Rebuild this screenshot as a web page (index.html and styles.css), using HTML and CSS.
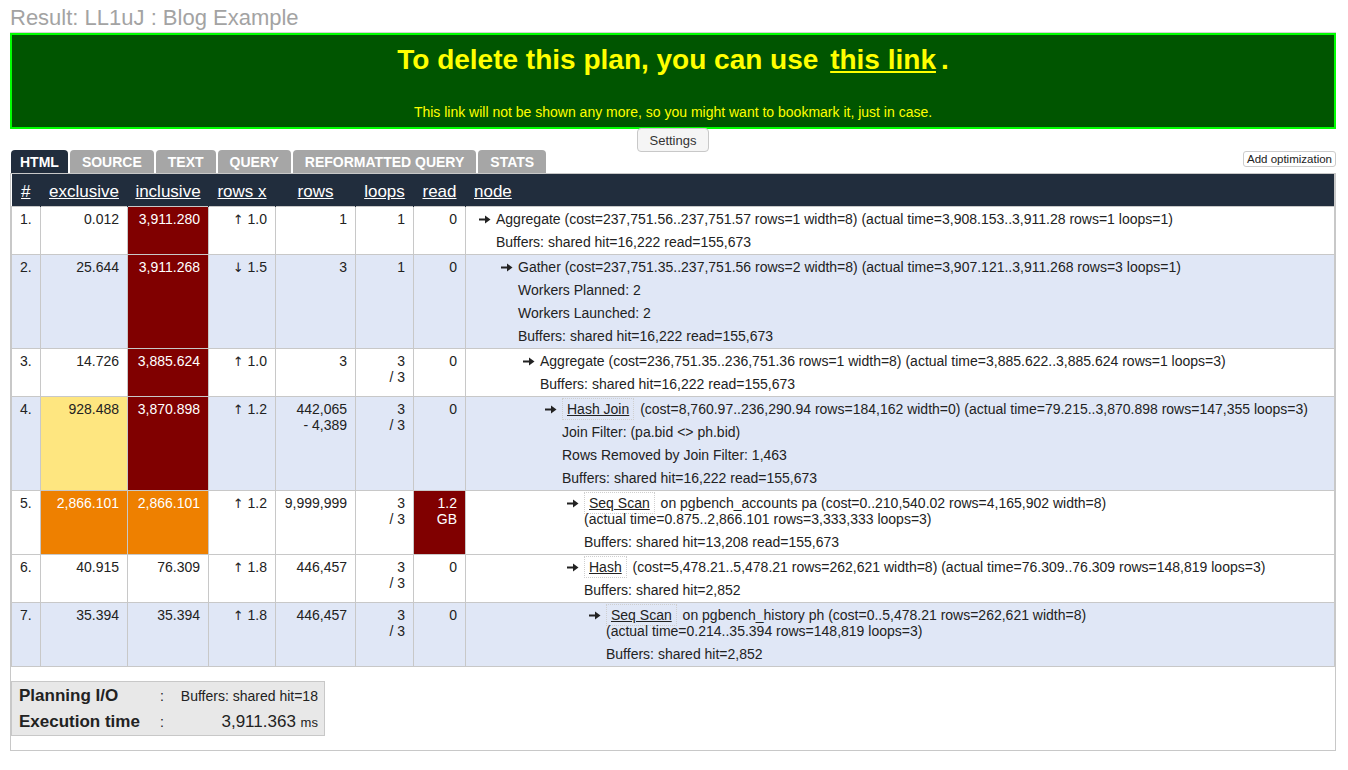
FILE: index.html
```html
<!DOCTYPE html>
<html>
<head>
<meta charset="utf-8">
<title>Result: LL1uJ : Blog Example</title>
<link rel="stylesheet" href="styles.css">
</head>
<body>
<div class="page">
  <h1 class="title">Result: LL1uJ : Blog Example</h1>
  <div class="banner">
    <div class="banner-head">To delete this plan, you can use <a href="#">this link</a>.</div>
    <div class="banner-note">This link will not be shown any more, so you might want to bookmark it, just in case.</div>
  </div>
  <div class="settings-row"><button class="settings">Settings</button></div>
  <div class="tabbar">
    <div class="tabs">
      <span class="tab active">HTML</span>
      <span class="tab">SOURCE</span>
      <span class="tab">TEXT</span>
      <span class="tab">QUERY</span>
      <span class="tab">REFORMATTED QUERY</span>
      <span class="tab">STATS</span>
    </div>
    <button class="addopt">Add optimization</button>
  </div>
  <div class="plan">
    <table class="explain">
      <colgroup>
        <col class="w-idx"><col class="w-excl"><col class="w-incl"><col class="w-rx"><col class="w-rows"><col class="w-loops"><col class="w-read"><col>
      </colgroup>
      <thead>
        <tr>
          <th><a>#</a></th>
          <th><a>exclusive</a></th>
          <th><a>inclusive</a></th>
          <th><a>rows x</a></th>
          <th><a>rows</a></th>
          <th><a>loops</a></th>
          <th><a>read</a></th>
          <th class="node-h"><a>node</a></th>
        </tr>
      </thead>
      <tbody>
        <tr>
          <td class="idx">1.</td>
          <td class="num">0.012</td>
          <td class="num c-dark">3,911.280</td>
          <td class="num"><span class="ud">↑</span> 1.0</td>
          <td class="num">1</td>
          <td class="num">1</td>
          <td class="num">0</td>
          <td class="node l0">
            <div class="p hd"><span class="arr"><svg width="12" height="9" viewBox="0 0 12 9"><rect x="0" y="3.5" width="7" height="2" fill="#222"/><polygon points="6,0.5 11.5,4.5 6,8.5" fill="#222"/></svg></span>Aggregate <span class="nw">(cost=237,751.56..237,751.57 rows=1 width=8)</span> <span class="nw">(actual time=3,908.153..3,911.28 rows=1 loops=1)</span></div>
            <div class="p">Buffers: shared hit=16,222 read=155,673</div>
          </td>
        </tr>
        <tr class="alt">
          <td class="idx">2.</td>
          <td class="num">25.644</td>
          <td class="num c-dark">3,911.268</td>
          <td class="num"><span class="ud">↓</span> 1.5</td>
          <td class="num">3</td>
          <td class="num">1</td>
          <td class="num">0</td>
          <td class="node l1">
            <div class="p hd"><span class="arr"><svg width="12" height="9" viewBox="0 0 12 9"><rect x="0" y="3.5" width="7" height="2" fill="#222"/><polygon points="6,0.5 11.5,4.5 6,8.5" fill="#222"/></svg></span>Gather <span class="nw">(cost=237,751.35..237,751.56 rows=2 width=8)</span> <span class="nw">(actual time=3,907.121..3,911.268 rows=3 loops=1)</span></div>
            <div class="p">Workers Planned: 2</div>
            <div class="p">Workers Launched: 2</div>
            <div class="p">Buffers: shared hit=16,222 read=155,673</div>
          </td>
        </tr>
        <tr>
          <td class="idx">3.</td>
          <td class="num">14.726</td>
          <td class="num c-dark">3,885.624</td>
          <td class="num"><span class="ud">↑</span> 1.0</td>
          <td class="num">3</td>
          <td class="num">3<br>/ 3</td>
          <td class="num">0</td>
          <td class="node l2">
            <div class="p hd"><span class="arr"><svg width="12" height="9" viewBox="0 0 12 9"><rect x="0" y="3.5" width="7" height="2" fill="#222"/><polygon points="6,0.5 11.5,4.5 6,8.5" fill="#222"/></svg></span>Aggregate <span class="nw">(cost=236,751.35..236,751.36 rows=1 width=8)</span> <span class="nw">(actual time=3,885.622..3,885.624 rows=1 loops=3)</span></div>
            <div class="p">Buffers: shared hit=16,222 read=155,673</div>
          </td>
        </tr>
        <tr class="alt">
          <td class="idx">4.</td>
          <td class="num c-yellow">928.488</td>
          <td class="num c-dark">3,870.898</td>
          <td class="num"><span class="ud">↑</span> 1.2</td>
          <td class="num">442,065<br>- 4,389</td>
          <td class="num">3<br>/ 3</td>
          <td class="num">0</td>
          <td class="node l3">
            <div class="p hd"><span class="arr"><svg width="12" height="9" viewBox="0 0 12 9"><rect x="0" y="3.5" width="7" height="2" fill="#222"/><polygon points="6,0.5 11.5,4.5 6,8.5" fill="#222"/></svg></span><span class="nm">Hash Join</span> <span class="nw">(cost=8,760.97..236,290.94 rows=184,162 width=0)</span> <span class="nw">(actual time=79.215..3,870.898 rows=147,355 loops=3)</span></div>
            <div class="p">Join Filter: (pa.bid &lt;&gt; ph.bid)</div>
            <div class="p">Rows Removed by Join Filter: 1,463</div>
            <div class="p">Buffers: shared hit=16,222 read=155,673</div>
          </td>
        </tr>
        <tr>
          <td class="idx">5.</td>
          <td class="num c-orange">2,866.101</td>
          <td class="num c-orange">2,866.101</td>
          <td class="num"><span class="ud">↑</span> 1.2</td>
          <td class="num">9,999,999</td>
          <td class="num">3<br>/ 3</td>
          <td class="num c-dark">1.2<br>GB</td>
          <td class="node l4">
            <div class="p hd"><span class="arr"><svg width="12" height="9" viewBox="0 0 12 9"><rect x="0" y="3.5" width="7" height="2" fill="#222"/><polygon points="6,0.5 11.5,4.5 6,8.5" fill="#222"/></svg></span><span class="nm">Seq Scan</span> <span class="nw">on pgbench_accounts pa</span> <span class="nw">(cost=0..210,540.02 rows=4,165,902 width=8)</span> <span class="nw">(actual time=0.875..2,866.101 rows=3,333,333 loops=3)</span></div>
            <div class="p">Buffers: shared hit=13,208 read=155,673</div>
          </td>
        </tr>
        <tr>
          <td class="idx">6.</td>
          <td class="num">40.915</td>
          <td class="num">76.309</td>
          <td class="num"><span class="ud">↑</span> 1.8</td>
          <td class="num">446,457</td>
          <td class="num">3<br>/ 3</td>
          <td class="num">0</td>
          <td class="node l4">
            <div class="p hd"><span class="arr"><svg width="12" height="9" viewBox="0 0 12 9"><rect x="0" y="3.5" width="7" height="2" fill="#222"/><polygon points="6,0.5 11.5,4.5 6,8.5" fill="#222"/></svg></span><span class="nm">Hash</span> <span class="nw">(cost=5,478.21..5,478.21 rows=262,621 width=8)</span> <span class="nw">(actual time=76.309..76.309 rows=148,819 loops=3)</span></div>
            <div class="p">Buffers: shared hit=2,852</div>
          </td>
        </tr>
        <tr class="alt">
          <td class="idx">7.</td>
          <td class="num">35.394</td>
          <td class="num">35.394</td>
          <td class="num"><span class="ud">↑</span> 1.8</td>
          <td class="num">446,457</td>
          <td class="num">3<br>/ 3</td>
          <td class="num">0</td>
          <td class="node l5">
            <div class="p hd"><span class="arr"><svg width="12" height="9" viewBox="0 0 12 9"><rect x="0" y="3.5" width="7" height="2" fill="#222"/><polygon points="6,0.5 11.5,4.5 6,8.5" fill="#222"/></svg></span><span class="nm">Seq Scan</span> <span class="nw">on pgbench_history ph</span> <span class="nw">(cost=0..5,478.21 rows=262,621 width=8)</span> <span class="nw">(actual time=0.214..35.394 rows=148,819 loops=3)</span></div>
            <div class="p">Buffers: shared hit=2,852</div>
          </td>
        </tr>
      </tbody>
    </table>
    <table class="sum">
      <tr>
        <th>Planning I/O</th>
        <td class="colon">:</td>
        <td class="val small">Buffers: shared hit=18</td>
      </tr>
      <tr>
        <th>Execution time</th>
        <td class="colon">:</td>
        <td class="val">3,911.363 <span class="unit">ms</span></td>
      </tr>
    </table>
  </div>
</div>
</body>
</html>
```

FILE: styles.css
```css
body {
  margin: 0;
  font-family: "Liberation Sans", Arial, sans-serif;
  color: #222;
  background: #fff;
}

.page {
  padding: 0 12px 0 10px;
}

.title {
  margin: 0;
  padding-top: 6px;
  height: 26px;
  line-height: 24px;
  font-size: 22px;
  font-weight: normal;
  color: #a3a3a3;
  border-bottom: 1px solid #d4d4d4;
}

.banner {
  border: 2px solid #00ff00;
  background: #005500;
  color: #ffff00;
  text-align: center;
  padding: 9px 0 7px;
}

.banner-head {
  font-size: 28px;
  font-weight: bold;
  line-height: 32px;
}

.banner-head a {
  color: #ffff00;
  margin: 0 5px 0 4px;
  text-decoration: underline;
}

.banner-note {
  font-size: 14px;
  line-height: 16px;
  margin-top: 28px;
}

.settings-row {
  display: flex;
  justify-content: center;
  height: 22px;
  margin-top: -1px;
  position: relative;
}

.settings {
  height: 24px;
  padding: 0 12px;
  font-family: "Liberation Sans", Arial, sans-serif;
  font-size: 13px;
  color: #333;
  background: #f5f5f5;
  border: 1px solid #c8c8c8;
  border-radius: 4px;
}

.tabbar {
  display: flex;
  justify-content: space-between;
  align-items: flex-start;
  height: 23px;
}

.tabs {
  display: flex;
  gap: 2px;
  padding-left: 1px;
}

.tab {
  height: 23px;
  line-height: 25px;
  padding: 0 12px;
  background: #a6a6a6;
  color: #fff;
  font-size: 14px;
  font-weight: bold;
  border-radius: 4px 4px 0 0;
}

.tab.active {
  background: #212d3d;
  padding: 0 9px;
}

.addopt {
  margin-top: 1px;
  height: 16px;
  padding: 0 3px;
  font-family: "Liberation Sans", Arial, sans-serif;
  font-size: 11.5px;
  line-height: 14px;
  color: #222;
  background: #fff;
  border: 1px solid #ccc;
  border-radius: 3px;
}

.plan {
  border: 1px solid #c8c8c8;
}

table.explain {
  width: 100%;
  border-collapse: collapse;
  table-layout: fixed;
  font-size: 14px;
}

.w-idx { width: 29px; }
.w-excl { width: 87px; }
.w-incl { width: 81px; }
.w-rx { width: 67px; }
.w-rows { width: 80px; }
.w-loops { width: 58px; }
.w-read { width: 52px; }

.explain th {
  background: #212d3d;
  color: #fff;
  font-weight: normal;
  font-size: 17px;
  height: 29px;
  padding: 3px 0 0;
  text-align: center;
  vertical-align: middle;
  border-right: 1px solid #212d3d;
}

.explain th:last-child {
  border-right: 1px solid #c8c8c8;
}

.explain th a {
  text-decoration: underline;
}

.explain th.node-h {
  text-align: left;
  padding-left: 8px;
}

.explain td {
  border: 1px solid #c8c8c8;
  vertical-align: top;
  background: #fff;
}

.explain tr.alt td {
  background: #e0e7f6;
}

.explain td.num,
.explain td.idx {
  padding: 4px 8px 0;
  line-height: 16px;
  text-align: right;
}

.explain td.idx {
  text-align: left;
}

.explain tr td.c-dark {
  background: #800000;
  color: #fff;
}

.explain tr td.c-orange {
  background: #ee8000;
  color: #fff;
}

.explain tr td.c-yellow {
  background: #fee680;
}

.ud {
  font-family: "DejaVu Sans", sans-serif;
  font-size: 13px;
}

.explain td.node {
  padding: 1px 4px 0 0;
}

.p {
  padding: 3px 0 4px;
  line-height: 16px;
}

.l0 .p { padding-left: 30px; }
.l1 .p { padding-left: 52px; }
.l2 .p { padding-left: 74px; }
.l3 .p { padding-left: 96px; }
.l4 .p { padding-left: 118px; }
.l5 .p { padding-left: 140px; }

.hd {
  text-indent: -17px;
}

.arr {
  display: inline-block;
  width: 17px;
  text-indent: 0;
}

.arr svg {
  display: block;
  margin-top: 3px;
}

.nw {
  white-space: nowrap;
}

.nm {
  padding: 2px 4px;
  border: 1px dotted #cfcfcf;
  text-decoration: underline;
  margin-right: 2px;
}

table.sum {
  margin: 14px 0 14px;
  background: #e8e8e8;
  border: 1px solid #c8c8c8;
  border-collapse: separate;
  border-spacing: 0;
  padding-top: 1px;
}

.sum th,
.sum td {
  height: 26px;
  padding: 0;
  vertical-align: middle;
}

.sum th {
  font-size: 17px;
  font-weight: bold;
  text-align: left;
  padding: 0 18px 0 7px;
}

.sum td.colon {
  font-size: 14px;
  padding: 0 17px 0 2px;
}

.sum td.val {
  font-size: 17px;
  text-align: right;
  padding-right: 6px;
}

.sum td.small {
  font-size: 14px;
}

.unit {
  font-size: 13px;
}
```
